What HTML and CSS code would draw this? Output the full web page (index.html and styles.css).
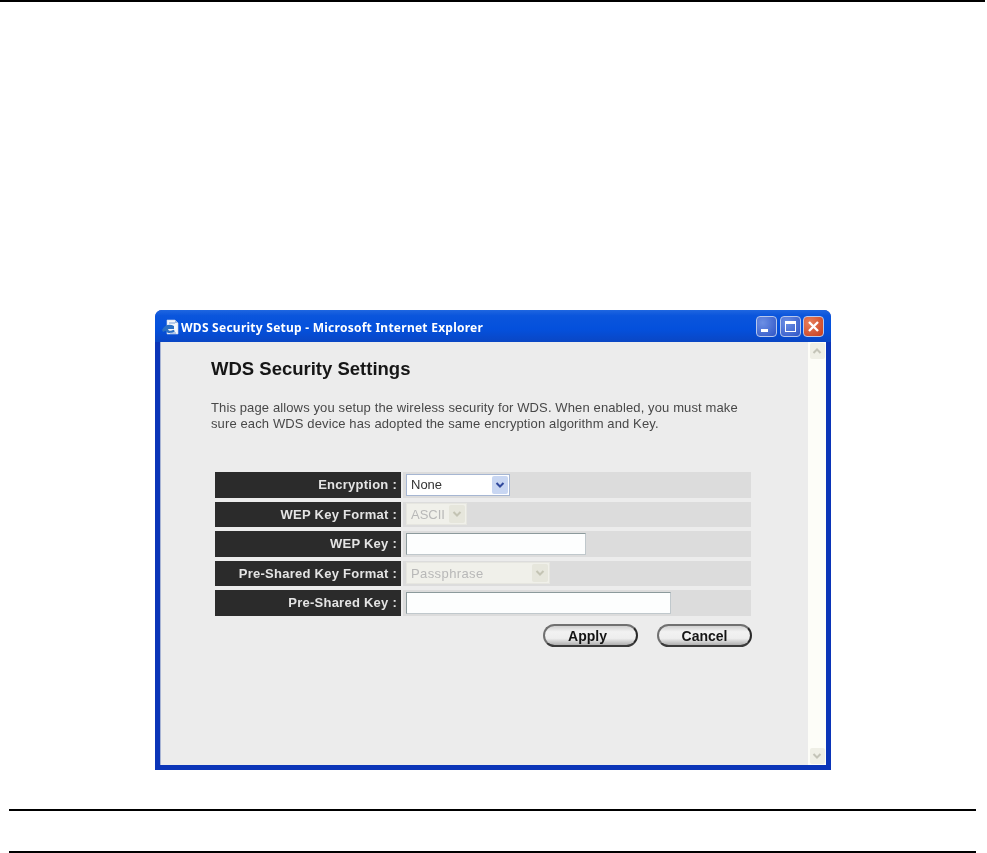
FILE: index.html
```html
<!DOCTYPE html>
<html lang="en">
<head>
<meta charset="utf-8">
<title>WDS Security Setup</title>
<link rel="stylesheet" href="styles.css">
</head>
<body>
<div class="top-rule"></div>
<div class="window">
  <div class="titlebar">
    <svg class="ie-icon" width="17" height="16" viewBox="0 0 17 16">
      <path d="M5 1h8l3 3v11H5z" fill="#f4f6fb" stroke="#c9d5ea" stroke-width=".6"/>
      <path d="M13 1v3h3z" fill="#9db7e0"/>
      <path d="M0 11c2.500-5 7.500-6.500 12-4v3H6c.5 2 3 2.600 5.500.8l1.500 1.400c-3.500 2.800-8 2.300-9.500-.5L1 13z" fill="#2a6fc4"/>
      <path d="M7 4h6M8 14h6" stroke="#7aa0d8" stroke-width="1"/>
    </svg>
    <span class="title-text">WDS Security Setup - Microsoft Internet Explorer</span>
    <div class="win-buttons">
      <span class="win-btn"><svg width="21" height="21" viewBox="0 0 21 21"><rect x="5" y="13" width="7" height="3" fill="#fff"/></svg></span>
      <span class="win-btn"><svg width="21" height="21" viewBox="0 0 21 21"><rect x="5.500" y="5.500" width="10" height="10" fill="none" stroke="#fff" stroke-width="1"/><rect x="5" y="5" width="11" height="3" fill="#fff"/></svg></span>
      <span class="win-btn close"><svg width="21" height="21" viewBox="0 0 21 21"><path d="M6 6l9 9M15 6l-9 9" stroke="#fff" stroke-width="2.400"/></svg></span>
    </div>
  </div>
  <div class="client">
    <main class="page">
      <h1 class="heading">WDS Security Settings</h1>
      <p class="intro">This page allows you setup the wireless security for WDS. When enabled, you must make<br>sure each WDS device has adopted the same encryption algorithm and Key.</p>
      <div class="form">
        <div class="row">
          <div class="label">Encryption :</div>
          <div class="value"><span class="select sel-enc">None<span class="arrow"><svg width="10" height="8" viewBox="0 0 10 8"><path d="M1.500 2l3.500 3.500L8.500 2" fill="none" stroke="#30489c" stroke-width="2"/></svg></span></span></div>
        </div>
        <div class="row">
          <div class="label">WEP Key Format :</div>
          <div class="value"><span class="select off sel-fmt">ASCII<span class="arrow"><svg width="10" height="8" viewBox="0 0 10 8"><path d="M1.500 2l3.500 3.500L8.500 2" fill="none" stroke="#c4c4b4" stroke-width="2"/></svg></span></span></div>
        </div>
        <div class="row">
          <div class="label">WEP Key :</div>
          <div class="value"><span class="input in-wep"></span></div>
        </div>
        <div class="row">
          <div class="label">Pre-Shared Key Format :</div>
          <div class="value"><span class="select off sel-psk">Passphrase<span class="arrow"><svg width="10" height="8" viewBox="0 0 10 8"><path d="M1.500 2l3.500 3.500L8.500 2" fill="none" stroke="#c4c4b4" stroke-width="2"/></svg></span></span></div>
        </div>
        <div class="row">
          <div class="label">Pre-Shared Key :</div>
          <div class="value"><span class="input in-psk"></span></div>
        </div>
      </div>
      <div class="actions">
        <span class="pill pill-apply">Apply</span>
        <span class="pill">Cancel</span>
      </div>
    </main>
    <div class="scrollbar">
      <span class="sb-btn"><svg width="10" height="8" viewBox="0 0 10 8"><path d="M1.500 6L5 2.500 8.500 6" fill="none" stroke="#c4c4b8" stroke-width="2"/></svg></span>
      <span class="sb-btn"><svg width="10" height="8" viewBox="0 0 10 8"><path d="M1.500 2L5 5.500 8.500 2" fill="none" stroke="#c4c4b8" stroke-width="2"/></svg></span>
    </div>
  </div>
</div>
<div class="bottom-rules">
  <div class="rule"></div>
  <div class="rule"></div>
</div>
</body>
</html>
```
FILE: styles.css
```css
* { box-sizing: border-box; }
html, body { margin: 0; background: #fff; }
body {
  width: 987px;
  height: 853px;
  overflow: hidden;
  font-family: "Liberation Sans", Arial, sans-serif;
}
.top-rule {
  height: 2px;
  width: 985px;
  background: #000;
}
.window {
  width: 676px;
  height: 460px;
  margin: 308px 0 0 155px;
  display: flex;
  flex-direction: column;
  background: #0b35b8;
  border-radius: 7px 7px 0 0;
  padding: 0 5px 5px;
  filter: blur(.4px);
}
.titlebar {
  height: 32px;
  flex: none;
  display: flex;
  align-items: center;
  margin: 0 -5px;
  padding: 1px 7px 0 7px;
  border-radius: 7px 7px 0 0;
  background: linear-gradient(#1f66e0 0, #0a55dc 18%, #0450dc 60%, #0a46c4 100%);
}
.ie-icon { flex: none; margin-right: 2px; }
.title-text {
  color: #fff;
  font: bold 12px "Noto Sans", sans-serif;
  letter-spacing: .25px;
  white-space: nowrap;
  margin-top: 1px;
}
.win-buttons {
  margin-left: auto;
  display: flex;
  gap: 2.500px;
}
.win-btn {
  width: 21px;
  height: 21px;
  border: 1px solid #b8c8ec;
  border-radius: 4px;
  background: radial-gradient(circle at 30% 30%, #6c8fe4, #2f55c6);
  display: flex;
  align-items: center;
  justify-content: center;
}
.win-btn svg { flex: none; margin: -1px; }
.win-btn.close { background: radial-gradient(circle at 30% 30%, #e8805c, #c83c1c); }
.client {
  flex: 1;
  display: flex;
  background: #ececec;
  border-left: 1px solid #a8b4d4;
  min-height: 0;
}
.page {
  flex: 1;
  padding: 17px 0 0 50px;
  min-width: 0;
}
.heading {
  margin: 0;
  font-size: 18.500px;
  line-height: 20px;
  font-weight: bold;
  color: #161616;
}
.intro {
  margin: 21px 0 0;
  font-size: 13px;
  letter-spacing: .12px;
  line-height: 15.500px;
  color: #484848;
  white-space: nowrap;
}
.form {
  margin: 41px 0 0 4px;
  width: 536px;
  display: flex;
  flex-direction: column;
  gap: 4px;
}
.row {
  height: 25.500px;
  display: flex;
  gap: 2px;
}
.label {
  width: 186px;
  flex: none;
  background: #2b2b2b;
  color: #e4e4e4;
  font-size: 13px;
  font-weight: bold;
  letter-spacing: .25px;
  padding-right: 4px;
  display: flex;
  align-items: center;
  justify-content: flex-end;
}
.value {
  flex: 1;
  background: #dcdcdc;
  padding-left: 3px;
  display: flex;
  align-items: center;
}
.select {
  height: 22px;
  display: flex;
  align-items: center;
  justify-content: space-between;
  padding: 0 1px 0 4px;
  background: #fff;
  border: 1px solid #a6b6d2;
  font-size: 13px;
  color: #333;
}
.select.off {
  background: #f0f0ea;
  border-color: #e6e6e0;
  color: #b8b8b8;
}
.arrow {
  width: 16px;
  height: 18px;
  background: #c8d6f2;
  border-radius: 2px;
  display: flex;
  align-items: center;
  justify-content: center;
}
.off .arrow { background: #e6e6dc; }
.sel-enc { width: 104px; }
.sel-fmt { width: 61px; }
.sel-psk { width: 144px; letter-spacing: .4px; }
.input {
  height: 22px;
  background: #fdfefe;
  border: 1px solid #8c9a9c;
  border-right-color: #c0c8cc;
  border-bottom-color: #c0c8cc;
  display: block;
}
.in-wep { width: 180px; }
.in-psk { width: 265px; }
.actions {
  width: 541px;
  margin-top: 8.500px;
  display: flex;
  justify-content: flex-end;
  gap: 19px;
}
.pill {
  width: 95px;
  height: 23px;
  border: 2px solid #707070;
  border-right-color: #2a2a2a;
  border-bottom-color: #3a3a3a;
  border-radius: 12px;
  background: linear-gradient(#d0d0d0, #f2f2f2 30%, #eeeeee 65%, #b0b0b0);
  font-size: 14px;
  font-weight: bold;
  color: #151515;
  display: flex;
  align-items: center;
  justify-content: center;
}
.pill-apply { padding-right: 6px; }
.scrollbar {
  width: 18px;
  flex: none;
  background: #fdfdf8;
  display: flex;
  flex-direction: column;
  justify-content: space-between;
  align-items: center;
  padding: 1px 0;
}
.sb-btn {
  width: 15px;
  height: 16px;
  background: #efefe6;
  border-radius: 2px;
  display: flex;
  align-items: center;
  justify-content: center;
}
.bottom-rules {
  margin: 39px 0 0 9px;
  width: 967px;
  display: flex;
  flex-direction: column;
  gap: 40px;
}
.rule {
  height: 2px;
  background: #000;
}
```
